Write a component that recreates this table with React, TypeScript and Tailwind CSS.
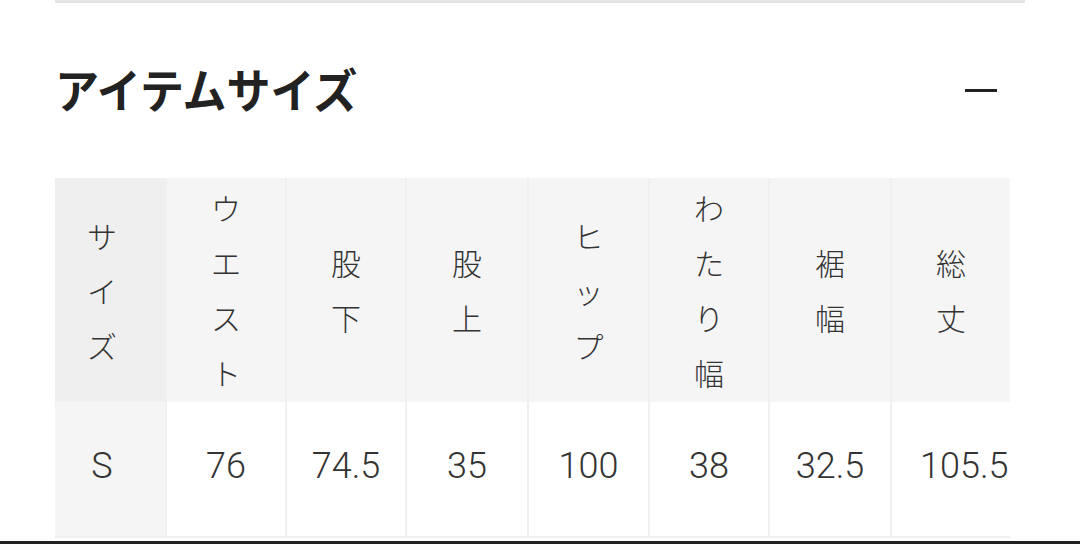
const headers = [
  { label: 'サイズ', value: 'S' },
  { label: 'ウエスト', value: '76' },
  { label: '股下', value: '74.5' },
  { label: '股上', value: '35' },
  { label: 'ヒップ', value: '100' },
  { label: 'わたり幅', value: '38' },
  { label: '裾幅', value: '32.5' },
  { label: '総丈', value: '105.5' },
]

export default function App() {
  return (
    <div
      className="w-[1080px] h-[544px] bg-white flex flex-col overflow-hidden text-[#333]"
      style={{ fontFamily: '"Noto Sans CJK JP", "Noto Sans", sans-serif' }}
    >
      <div className="ml-[55px] w-[970px] h-[3px] bg-[#e4e4e4]" />

      {/* section header */}
      <div className="ml-[55px] w-[970px] h-[175px] flex items-center justify-between">
        <h2 className="text-[44px] leading-none font-bold text-[#222] -mt-[6px] scale-y-[1.05]">アイテムサイズ</h2>
        <span className="mr-[28px] w-[32px] h-[3px] bg-[#222]" />
      </div>

      {/* size table */}
      <div className="ml-[55px] w-[955px] overflow-hidden">
        <div className="grid grid-cols-[110px_120px_120px_122px_121px_120px_122px_150px] w-[985px]">
          {headers.map((h, i) => (
            <div
              key={h.label}
              className={`h-[224px] flex flex-col items-center justify-center text-[30px] leading-[55px] font-light ${
                i === 0 ? 'bg-[#efefef] pr-[16px]' : 'bg-[#f5f5f5] border-l-2 border-[#f0f0f0]'
              } ${i === 7 ? 'pr-[30px]' : ''}`}
            >
              {h.label.split('').map((c, j) => (
                <span key={j}>{c}</span>
              ))}
            </div>
          ))}
          {headers.map((h, i) => (
            <div
              key={h.value + i}
              className={`h-[136px] flex items-center border-b-2 border-[#efefef] text-[36px] font-light ${
                i === 0 ? 'bg-[#f5f5f5] justify-center pr-[16px]' : 'bg-white border-l-2 border-l-[#f0f0f0] justify-center'
              } ${i === 7 ? '!justify-start pl-[28px]' : ''}`}
              style={{ fontFamily: 'Roboto, "Noto Sans", sans-serif' }}
            >
              <span className="-mt-[6px]">{h.value}</span>
            </div>
          ))}
        </div>
      </div>

      <div className="flex-1" />
      <div className="h-[3px] w-full bg-[#222]" />
    </div>
  )
}
